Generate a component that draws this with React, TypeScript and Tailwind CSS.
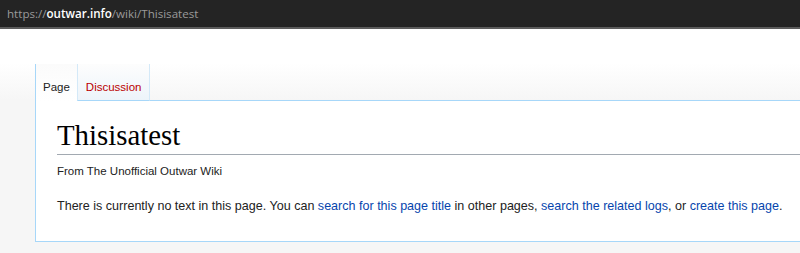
import * as React from "react";

const links = "text-[#0645ad]";

export default function App() {
  return (
    <div className="relative h-[253px] w-[800px] overflow-hidden bg-[#f6f6f6] font-['Liberation_Sans',Arial,sans-serif]">
      {/* browser address bar */}
      <div className="flex h-[29px] items-center border-b-2 border-[#5c5c5c] bg-[#242424] pl-[7px] font-['Open_Sans','Noto_Sans',sans-serif] text-[11.6px]">
        <span className="text-[#9a9a9a]">https://</span>
        <span className="font-semibold text-white">outwar.info</span>
        <span className="text-[#9a9a9a]">/wiki/Thisisatest</span>
      </div>

      <div className="bg-[linear-gradient(to_bottom,#ffffff_0px,#ffffff_34px,#f6f6f6_71px)]">
        {/* tabs */}
        <div className="flex h-[72px] items-end pl-[35px]">
          <div className="flex h-[37px] items-end border-l border-l-[#a7d7f9] bg-[linear-gradient(to_bottom,#fbfbfb,#ffffff)] px-[7px] pb-[5px] text-[11.5px] text-[#222]">
            Page
          </div>
          <div className="flex h-[37px] items-end border-x border-b border-x-[#d4e9f8] border-b-[#a7d7f9] bg-[linear-gradient(to_bottom,#fdfdfd,#edf4fa)] px-[8px] pb-[4px] text-[11.5px] text-[#ba0000]">
            Discussion
          </div>
          <div className="h-[37px] flex-1 border-b border-[#a7d7f9]" />
        </div>

        {/* content */}
        <div className="ml-[35px] border-b border-l border-[#a7d7f9] bg-white pb-[25px] pl-[21px] pt-[15px]">
          <h1 className="h-[39px] border-b border-[#a2a9b1] font-['Liberation_Serif',Georgia,serif] text-[28.8px] leading-[38px] text-black">
            Thisisatest
          </h1>
          <div className="mt-[8px] text-[11.5px] leading-[16px] text-[#222]">From The Unofficial Outwar Wiki</div>
          <p className="mt-[17px] whitespace-nowrap text-[12.55px] leading-[20px] text-[#222]">
            There is currently no text in this page. You can <span className={links}>search for this page title</span> in
            other pages, <span className={links}>search the related logs</span>, or{" "}
            <span className={links}>create this page</span>.
          </p>
        </div>
      </div>
    </div>
  );
}
